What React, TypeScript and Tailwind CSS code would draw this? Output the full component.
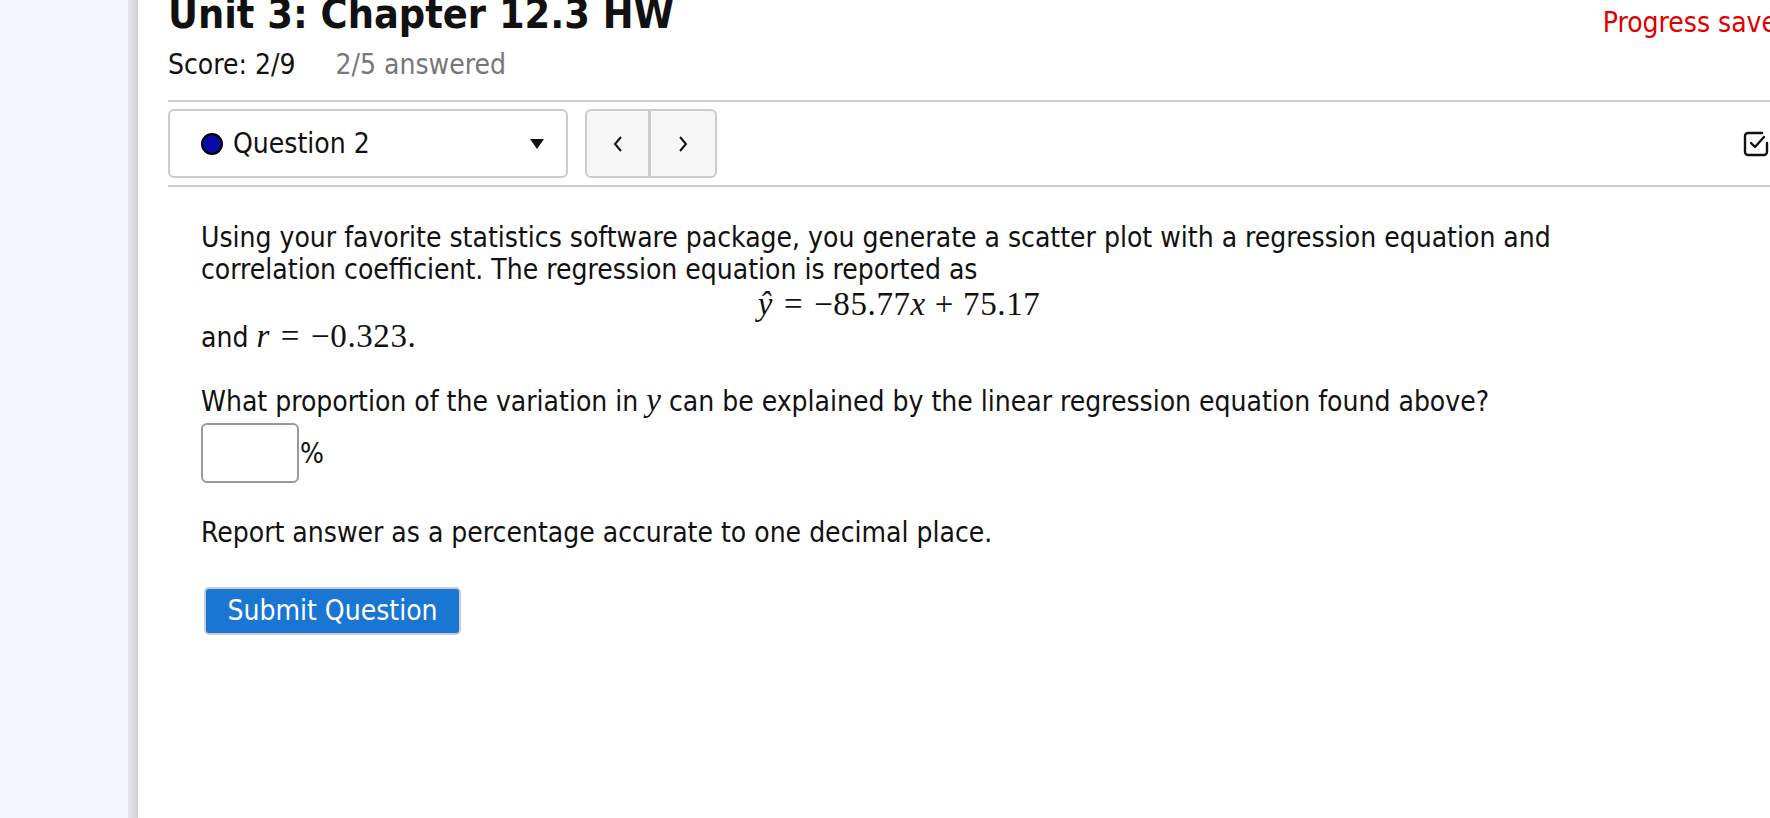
import React from "react";

// Small drawings used in the toolbar
const Dot = () => (
  <span className="inline-block w-[22px] h-[22px] rounded-full bg-[#0a0aa8] border-2 border-black" />
);

const CaretDown = () => (
  <svg width="14" height="10" viewBox="0 0 14 10">
    <polygon points="0,0 14,0 7,10" fill="#111" />
  </svg>
);

const Chevron = ({ dir }: { dir: "left" | "right" }) => (
  <svg width="10" height="18" viewBox="0 0 10 18" fill="none" stroke="#111" strokeWidth="2">
    {dir === "left" ? <polyline points="8,2 2,9 8,16" /> : <polyline points="2,2 8,9 2,16" />}
  </svg>
);

const CheckSquare = () => (
  <svg width="28" height="28" viewBox="0 0 28 28" fill="none" stroke="#111" strokeWidth="2.4" strokeLinecap="round" strokeLinejoin="round">
    <path d="M25 13v9a3 3 0 0 1-3 3H6a3 3 0 0 1-3-3V6a3 3 0 0 1 3-3h14" />
    <path d="M9 13l4 4 9-10" />
  </svg>
);

const App = () => {
  return (
    <div className="w-[1770px] h-[818px] overflow-hidden flex bg-white text-[#111] font-['DejaVu_Sans_Condensed','DejaVu_Sans',sans-serif]">
      {/* left rail */}
      <aside className="w-[128px] shrink-0 bg-[#f5f6fd]" />
      <div className="w-[10px] shrink-0 bg-linear-to-r from-[#e6e6ec] to-[#cfcfd6]" />

      <main className="w-[1655px] shrink-0 pl-[30px]">
        {/* header */}
        <div className="flex items-start justify-between -mt-[8px]">
          <h1 className="text-[41px] font-bold leading-[44px]">Unit 3: Chapter 12.3 HW</h1>
          <span className="mt-[16px] text-[28px] leading-[30px] text-[#e00000]">Progress saved</span>
        </div>

        <div className="flex items-center gap-[40px] mt-[12px] text-[28px] leading-[30px]">
          <span>Score: 2/9</span>
          <span className="text-[#777]">2/5 answered</span>
        </div>

        {/* question toolbar */}
        <div className="mt-[20px] border-t-2 border-b-2 border-[#cccccc] pt-[7px] pb-[7px] flex items-center">
          <button className="w-[400px] h-[69px] rounded-[6px] border-2 border-[#cccccc] bg-white flex items-center pl-[31px] pr-[22px]">
            <Dot />
            <span className="ml-[10px] text-[28px] leading-[30px]">Question 2</span>
            <span className="ml-auto flex">
              <CaretDown />
            </span>
          </button>
          <div className="ml-[17px] h-[69px] flex rounded-[6px] border-2 border-[#cccccc] bg-[#f7f7f7] overflow-hidden">
            <button className="w-[64px] flex items-center justify-center border-r-[3px] border-[#cccccc]">
              <Chevron dir="left" />
            </button>
            <button className="w-[64px] flex items-center justify-center">
              <Chevron dir="right" />
            </button>
          </div>
          <span className="ml-auto mr-[23px] flex">
            <CheckSquare />
          </span>
        </div>

        {/* question body */}
        <div className="pl-[33px] pt-[35px] w-[1429px] text-[28px] leading-[31.6px]">
          <p>
            Using your favorite statistics software package, you generate a scatter plot with a regression equation and
            correlation coefficient. The regression equation is reported as
          </p>
          <div className="mt-[3px] text-center font-['Liberation_Serif',serif] text-[33px] leading-[32px] tracking-[0.6px]">
            <span className="italic">ŷ</span>
            <span className="mx-[11px]">=</span>−85.77<span className="italic">x</span>
            <span className="mx-[9px]">+</span>75.17
          </div>
          <p className="mt-[1px]">
            and{" "}
            <span className="font-['Liberation_Serif',serif] text-[33px] tracking-[0.6px]">
              <span className="italic">r</span>
              <span className="mx-[11px]">=</span>−0.323.
            </span>
          </p>

          <p className="mt-[31px]">
            What proportion of the variation in{" "}
            <span className="font-['Liberation_Serif',serif] italic text-[33px]">y</span> can be explained by the linear
            regression equation found above?
          </p>
          <div className="mt-[6px] flex items-center">
            <input className="w-[98px] h-[60px] rounded-[6px] border-2 border-[#999] bg-white" />
            <span className="ml-[1px]">%</span>
          </div>

          <p className="mt-[34px]">Report answer as a percentage accurate to one decimal place.</p>

          <button className="mt-[38px] ml-[3px] w-[257px] h-[48px] rounded-[5px] border-2 border-[#cccccc] bg-[#1976d2] text-white text-[28px] leading-[30px]">
            Submit Question
          </button>
        </div>
      </main>
    </div>
  );
};

export default App;
